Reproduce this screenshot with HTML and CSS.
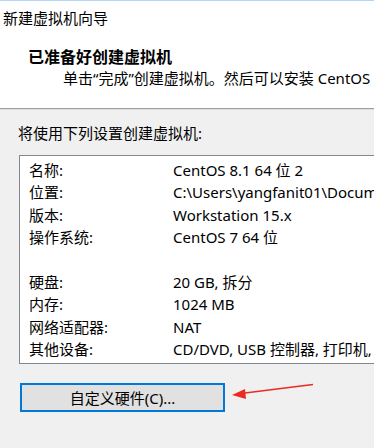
FILE: index.html
```html
<!DOCTYPE html>
<html lang="zh-CN">

<head>
    <meta charset="UTF-8">
    <meta name="viewport" content="width=device-width, initial-scale=1.0">
    <title>新建虚拟机向导</title>
    <link rel="stylesheet" href="styles.css">
</head>

<body>
    <div class="window">
        <div class="header">
            <p class="title">新建虚拟机向导</p>
            <h2 class="heading">已准备好创建虚拟机</h2>
            <p class="sub">单击“完成”创建虚拟机。然后可以安装 CentOS 8.1 64 位。</p>
        </div>

        <div class="content">
            <p class="intro">将使用下列设置创建虚拟机:</p>
            <div class="listbox">
                <div class="row"><span class="label">名称:</span><span class="value">CentOS 8.1 64 位 2</span></div>
                <div class="row"><span class="label">位置:</span><span class="value">C:\Users\yangfanit01\Documents\Virtual Machines</span></div>
                <div class="row"><span class="label">版本:</span><span class="value">Workstation 15.x</span></div>
                <div class="row"><span class="label">操作系统:</span><span class="value">CentOS 7 64 位</span></div>
                <div class="row"></div>
                <div class="row"><span class="label">硬盘:</span><span class="value">20 GB, 拆分</span></div>
                <div class="row"><span class="label">内存:</span><span class="value">1024 MB</span></div>
                <div class="row"><span class="label">网络适配器:</span><span class="value">NAT</span></div>
                <div class="row"><span class="label">其他设备:</span><span class="value">CD/DVD, USB 控制器, 打印机, 声卡</span></div>
            </div>

            <div class="actions">
                <button class="btn">自定义硬件(C)...</button>
                <svg class="arrow" width="90" height="20" viewBox="0 0 90 20">
                    <line x1="10" y1="10.5" x2="82" y2="1.5" stroke="#ec2a24" stroke-width="1.6" />
                    <polygon points="1,12 14,6 15,16" fill="#ec2a24" />
                </svg>
            </div>
        </div>
    </div>
</body>

</html>
```

FILE: styles.css
```css
* {
    margin: 0px;
    padding: 0px;
    box-sizing: border-box;
}

body {
    background-color: #f0f0f0;
    font-family: "Noto Sans", "Noto Sans CJK SC", sans-serif;
    font-size: 15px;
    color: #000;
    overflow: hidden;
}

.window {
    width: 374px;
    height: 448px;
    border-top: 1px solid #b4d6f4;
    overflow: hidden;
}

.header {
    height: 108px;
    background-color: #fff;
    border-bottom: 1px solid #a0a0a0;
    box-shadow: 0 1px 0 #dcdcdc;
    white-space: nowrap;
}

.title {
    padding: 6px 0 0 3px;
    line-height: 22px;
}

.heading {
    padding: 17px 0 0 28px;
    font-size: 16px;
    font-weight: bold;
    line-height: 22px;
}

.sub {
    padding-left: 63px;
    line-height: 20px;
}

.content {
    padding: 13px 0 0 18px;
}

.intro {
    line-height: 22px;
}

.listbox {
    margin: 11px 0 0 1px;
    width: 420px;
    height: 209px;
    background-color: #fff;
    border: 1px solid #828790;
    padding: 3px 0 0 9px;
    white-space: nowrap;
}

.row {
    display: flex;
    height: 22.4px;
    line-height: 22.4px;
}

.label {
    width: 144px;
    flex-shrink: 0;
}

.actions {
    position: relative;
    margin-top: 19px;
    padding-left: 2px;
}

.btn {
    width: 205px;
    height: 29px;
    background-color: #e1e1e1;
    border: 2px solid #0078d7;
    font-family: inherit;
    font-size: 15px;
    color: #000;
}

.arrow {
    position: absolute;
    left: 213px;
    top: 0px;
}
```
